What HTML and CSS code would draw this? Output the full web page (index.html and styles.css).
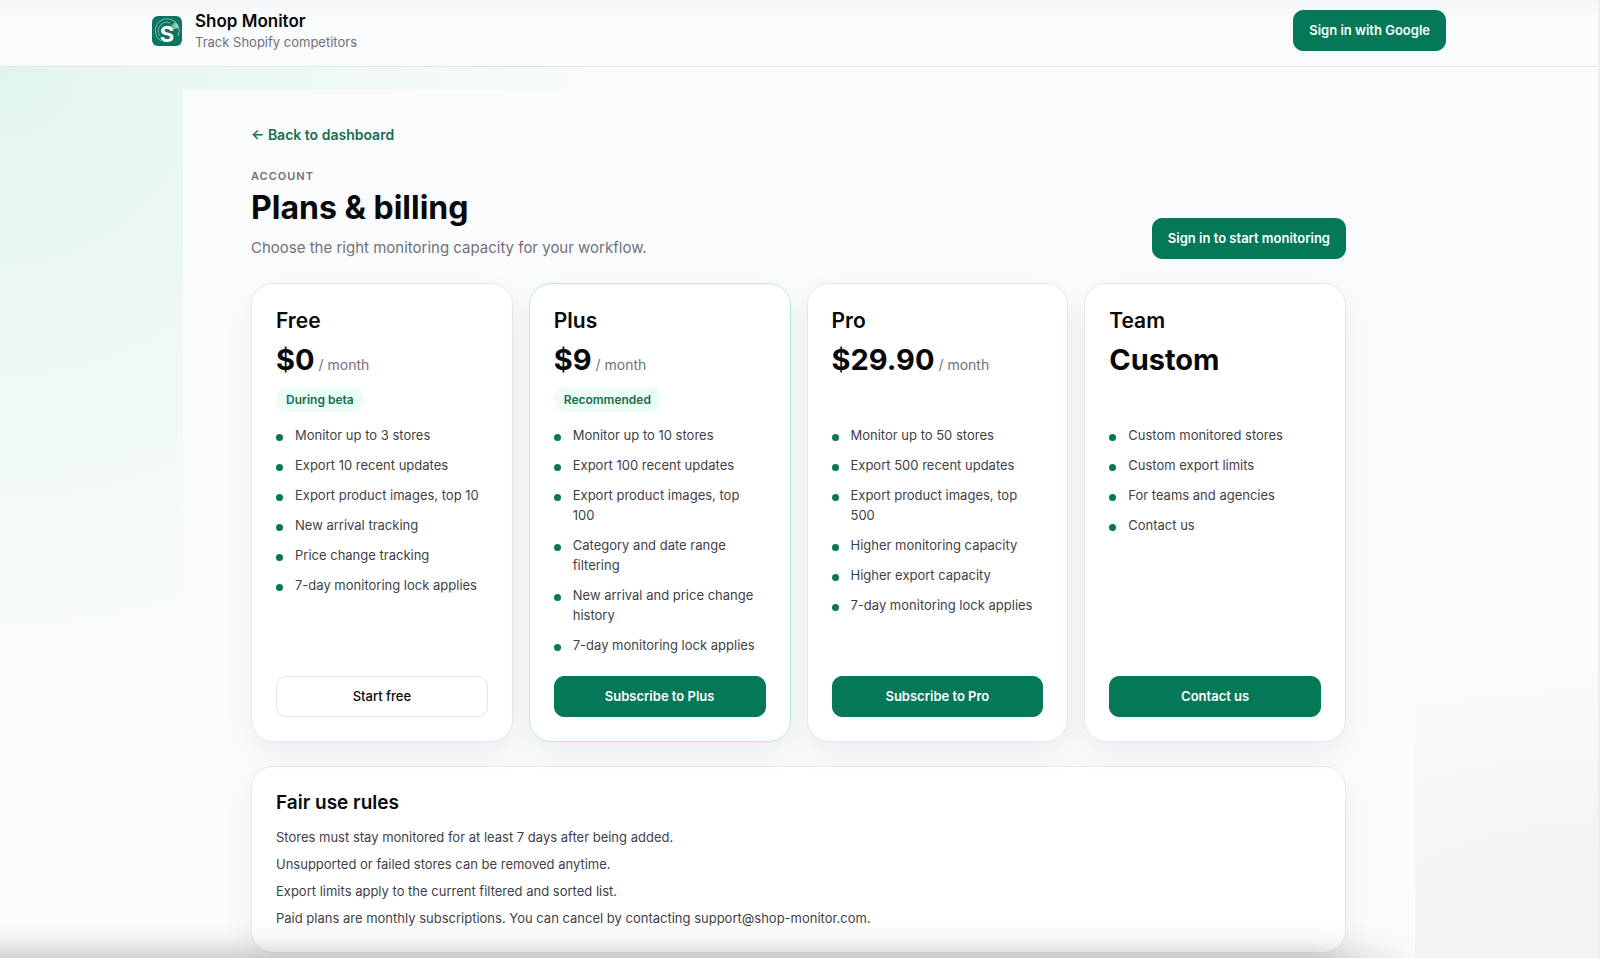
FILE: index.html
```html
<!DOCTYPE html>
<html lang="en">
<head>
<meta charset="utf-8">
<meta name="viewport" content="width=device-width, initial-scale=1">
<title>Plans &amp; billing - Shop Monitor</title>
<link rel="stylesheet" href="styles.css">
</head>
<body>
<header class="topbar">
  <div class="topbar-inner">
    <div class="brand">
      <svg class="brand-logo" viewBox="0 0 30 30" aria-hidden="true">
        <defs>
          <linearGradient id="sweep" x1="0" y1="0" x2="1" y2="0">
            <stop offset="0" stop-color="#fff" stop-opacity=".1"/>
            <stop offset="1" stop-color="#fff" stop-opacity=".7"/>
          </linearGradient>
        </defs>
        <rect width="30" height="30" rx="6" fill="#0b7560"/>
        <path d="M9 25A12 12 0 1 1 26 20" fill="none" stroke="#7dbcab" stroke-width="1"/>
        <path d="M8 20A8.500 8.500 0 0 1 18 7" fill="none" stroke="#7dbcab" stroke-width="1"/>
        <path d="M14 14 23 6q3 2.500 3.500 6L18 14z" fill="url(#sweep)"/>
        <text class="logo-letter" x="15" y="26" text-anchor="middle">S</text>
      </svg>
      <div class="brand-text">
        <span class="brand-name">Shop Monitor</span>
        <span class="brand-tag">Track Shopify competitors</span>
      </div>
    </div>
    <button class="btn btn-primary" type="button">Sign in with Google</button>
  </div>
</header>

<main class="panel">
  <a class="back" href="#">← Back to dashboard</a>
  <div class="heading">
    <div>
      <p class="eyebrow">ACCOUNT</p>
      <h1 class="title">Plans &amp; billing</h1>
      <p class="subtitle">Choose the right monitoring capacity for your workflow.</p>
    </div>
    <button class="btn btn-primary" type="button">Sign in to start monitoring</button>
  </div>

  <section class="plans">
    <article class="card plan">
      <h2 class="plan-name">Free</h2>
      <p class="price">$0 <span class="per">/ month</span></p>
      <div class="tag-row"><span class="tag">During beta</span></div>
      <ul class="features">
        <li>Monitor up to 3 stores</li>
        <li>Export 10 recent updates</li>
        <li>Export product images, top 10</li>
        <li>New arrival tracking</li>
        <li>Price change tracking</li>
        <li>7-day monitoring lock applies</li>
      </ul>
      <button class="btn btn-plain" type="button">Start free</button>
    </article>
    <article class="card plan plan-featured">
      <h2 class="plan-name">Plus</h2>
      <p class="price">$9 <span class="per">/ month</span></p>
      <div class="tag-row"><span class="tag">Recommended</span></div>
      <ul class="features">
        <li>Monitor up to 10 stores</li>
        <li>Export 100 recent updates</li>
        <li>Export product images, top 100</li>
        <li>Category and date range filtering</li>
        <li>New arrival and price change history</li>
        <li>7-day monitoring lock applies</li>
      </ul>
      <button class="btn btn-primary" type="button">Subscribe to Plus</button>
    </article>
    <article class="card plan">
      <h2 class="plan-name">Pro</h2>
      <p class="price">$29.90 <span class="per">/ month</span></p>
      <div class="tag-row"></div>
      <ul class="features">
        <li>Monitor up to 50 stores</li>
        <li>Export 500 recent updates</li>
        <li>Export product images, top 500</li>
        <li>Higher monitoring capacity</li>
        <li>Higher export capacity</li>
        <li>7-day monitoring lock applies</li>
      </ul>
      <button class="btn btn-primary" type="button">Subscribe to Pro</button>
    </article>
    <article class="card plan">
      <h2 class="plan-name">Team</h2>
      <p class="price">Custom</p>
      <div class="tag-row"></div>
      <ul class="features">
        <li>Custom monitored stores</li>
        <li>Custom export limits</li>
        <li>For teams and agencies</li>
        <li>Contact us</li>
      </ul>
      <button class="btn btn-primary" type="button">Contact us</button>
    </article>
  </section>

  <section class="card rules">
    <h2 class="rules-title">Fair use rules</h2>
    <p>Stores must stay monitored for at least 7 days after being added.</p>
    <p>Unsupported or failed stores can be removed anytime.</p>
    <p>Export limits apply to the current filtered and sorted list.</p>
    <p>Paid plans are monthly subscriptions. You can cancel by contacting support@shop-monitor.com.</p>
  </section>
</main>
<div class="bottom-shade" aria-hidden="true"></div>
</body>
</html>
```
FILE: styles.css
```css
* { box-sizing: border-box; }

body {
  display: flex;
  flex-direction: column;
  margin: 0;
  min-height: 100vh;
  border-right: 2px solid #eceef0;
  font-family: Inter, "Liberation Sans", sans-serif;
  font-size: 13px;
  line-height: 20px;
  color: #09090b;
  background:
    radial-gradient(ellipse 620px 620px at 0 60px, #e1f5ed, rgba(225, 245, 237, 0)),
    radial-gradient(ellipse 560px 300px at 100% 100%, #f2f3f4 30%, rgba(242, 243, 244, 0)),
    #fafbfd;
}

h1, h2, p, ul { margin: 0; padding: 0; }

.topbar {
  border-bottom: 1px solid #e4e7e9;
  background: linear-gradient(#f5f6f7, #fafbfd 16px);
}

.topbar-inner {
  display: flex;
  align-items: flex-start;
  justify-content: space-between;
  max-width: 1294px;
  margin: 0 auto;
  padding: 10px 0 14px;
}

.brand { display: flex; align-items: center; gap: 13px; }
.brand-logo { width: 30px; height: 30px; }
.logo-letter { font: 700 22px Inter, sans-serif; fill: #fff; }
.brand-text { display: flex; flex-direction: column; }
.brand-name { font-size: 17px; font-weight: 600; line-height: 22px; }
.brand-tag { color: #71717a; }

.btn {
  padding: 10px 15px;
  border: 1px solid #047857;
  border-radius: 10px;
  font-family: inherit;
  font-size: 13px;
  font-weight: 600;
  line-height: 19px;
  cursor: pointer;
}

.btn-primary { background: #047857; color: #fff; }
.btn-plain { border-color: #e4e4e7; background: #fff; color: #09090b; font-weight: 500; }

.panel {
  flex: 1;
  width: 100%;
  max-width: 1232px;
  margin: 23px auto 0;
  padding: 35px 69px 0 68px;
  border-radius: 4px 4px 0 0;
  background: #fafbfd;
}

.back { color: #166f4d; font-size: 14px; font-weight: 600; text-decoration: none; }

.heading {
  display: flex;
  align-items: flex-end;
  justify-content: space-between;
  margin: 23px 0 24px;
}

.eyebrow { font-size: 11px; font-weight: 600; line-height: 16px; letter-spacing: 1px; color: #71717a; }
.title { font-size: 32px; font-weight: 700; line-height: 48px; }
.subtitle { margin-top: 4px; font-size: 15px; line-height: 23px; color: #71717a; }

.plans { display: grid; grid-template-columns: repeat(4, 1fr); gap: 16px; }

.card {
  padding: 24px;
  border: 1px solid #e7e8ea;
  border-radius: 22px;
  background: #fff;
  box-shadow: 0 12px 32px rgba(24, 24, 27, 0.06);
}

.plan { display: flex; flex-direction: column; }
.plan-featured { border-color: #b5efd6; }
.plan-name { font-size: 21px; font-weight: 600; line-height: 26px; }

.price {
  display: flex;
  align-items: baseline;
  gap: 4px;
  height: 40px;
  margin-top: 6px;
  font-size: 29px;
  font-weight: 700;
  line-height: 40px;
}

.per { font-size: 14px; font-weight: 400; line-height: 20px; color: #71717a; }
.tag-row { height: 25px; margin-top: 7px; }

.tag {
  display: block;
  width: fit-content;
  padding: 0 10px;
  border-radius: 13px;
  background: #ecfdf5;
  color: #166f4d;
  font-size: 12px;
  font-weight: 600;
  line-height: 25px;
}

.features {
  display: grid;
  gap: 10px;
  margin: 13px 0 21px;
  list-style: none;
  color: #3f3f46;
}

.features li { display: flex; gap: 12px; padding-right: 4px; }

.features li::before {
  content: "";
  flex: none;
  width: 7px;
  height: 7px;
  margin-top: 9px;
  border-radius: 50%;
  background: #047857;
}

.plan .btn { margin-top: auto; }

.rules { margin-top: 24px; color: #3f3f46; }
.rules-title { margin-bottom: 12px; font-size: 19px; font-weight: 600; line-height: 24px; color: #09090b; }
.rules p + p { margin-top: 7px; }

.bottom-shade {
  position: fixed;
  left: 0;
  right: 180px;
  bottom: 0;
  height: 36px;
  background: linear-gradient(rgba(0, 0, 0, 0), rgba(0, 0, 0, 0.04) 50%, rgba(0, 0, 0, 0.16));
  -webkit-mask-image: linear-gradient(90deg, #000 92%, transparent);
  mask-image: linear-gradient(90deg, #000 92%, transparent);
  pointer-events: none;
}
```
